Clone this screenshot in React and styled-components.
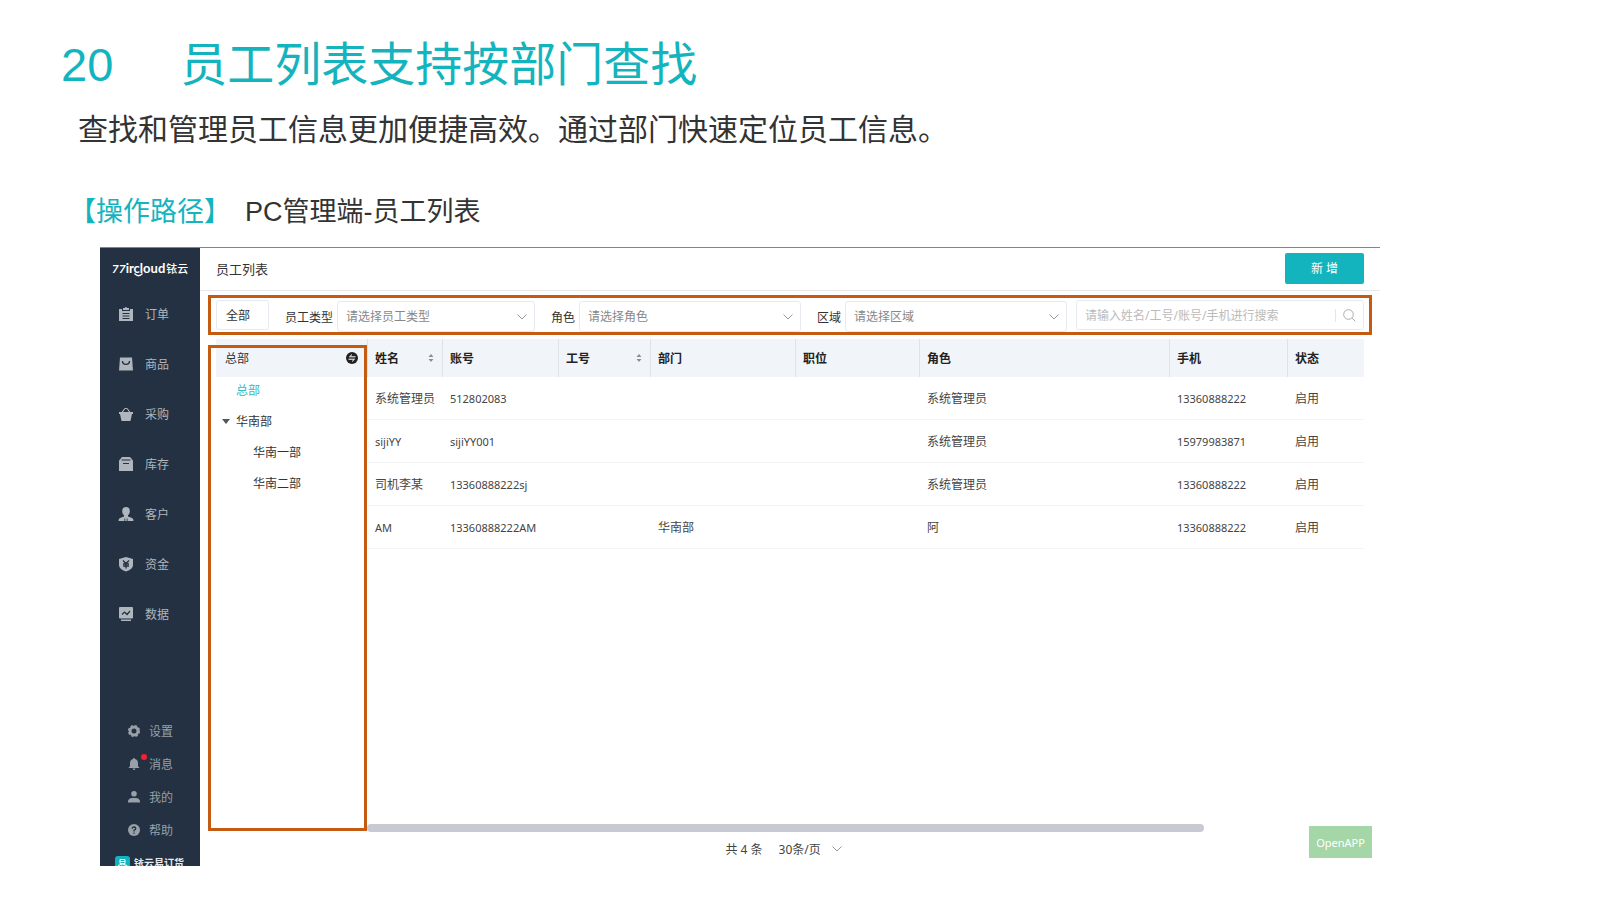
import React, { useState } from 'react'
import styled, { createGlobalStyle } from 'styled-components'

const GlobalStyle = createGlobalStyle`
    * {
        box-sizing: border-box;
    }

    body {
        margin: 0;
        background: #fff;
        color: #333;
        font-family: 'Noto Sans', 'Noto Sans CJK SC', sans-serif;
        font-size: 12px;
    }

    button, input, select {
        font-family: inherit;
        font-size: inherit;
        color: inherit;
    }
`

const Slide = styled.div`
    display: flex;
    flex-direction: column;
    min-height: 100vh;
    padding: 33px 220px 34px 61px;
    font-family: 'Liberation Sans', 'Noto Sans CJK SC', sans-serif;
`

const Title = styled.h1`
    display: flex;
    gap: 67px;
    margin: 0;
    color: #14b4be;
    font-size: 47px;
    font-weight: 400;
    line-height: 64px;
`

const Subtitle = styled.p`
    margin: 13px 0 0 17px;
    font-size: 30px;
    line-height: 40px;
`

const PathLine = styled.p`
    display: flex;
    gap: 14px;
    margin: 42px 0 15px 8px;
    font-size: 27px;
    line-height: 40px;

    strong {
        color: #14b4be;
        font-weight: 400;
    }
`

const Window = styled.div`
    display: grid;
    grid-template-columns: 100px 1fr;
    flex: 1;
    margin-left: 39px;
    border-top: 1px solid #6a9096;
    font-family: 'Noto Sans', 'Noto Sans CJK SC', sans-serif;
`

const Sidebar = styled.aside`
    display: flex;
    flex-direction: column;
    background: #233142;
    overflow: hidden;
`

const Logo = styled.div`
    position: relative;
    display: flex;
    align-items: center;
    justify-content: center;
    gap: 1px;
    height: 41px;
    padding-bottom: 2px;
    color: #fff;
    font-family: Lato, 'Noto Sans CJK SC', sans-serif;
    font-size: 13px;
    font-weight: 700;

    i {
        font-size: 12px;
    }

    small {
        font-size: 11px;
        font-weight: 500;
    }

    svg {
        position: absolute;
        top: 25px;
        left: 34px;
    }
`

const Nav = styled.nav`
    display: flex;
    flex-direction: column;
    margin-top: ${({ $bottom }) => ($bottom ? 'auto' : '0')};
`

const NavLink = styled.a`
    position: relative;
    display: flex;
    align-items: center;
    gap: ${({ $small }) => ($small ? '9px' : '12px')};
    height: ${({ $small }) => ($small ? '33px' : '50px')};
    padding-left: ${({ $small }) => ($small ? '28px' : '19px')};
    color: ${({ $small }) => ($small ? '#98a0a8' : '#b0b6bd')};
    text-decoration: none;
`

const Dot = styled.span`
    position: absolute;
    top: 7px;
    left: 41px;
    width: 6px;
    height: 6px;
    border-radius: 50%;
    background: #f5222d;
`

const Brand = styled.div`
    display: flex;
    gap: 4px;
    height: 20px;
    padding: 10px 0 0 15px;
    color: #e8ebee;
    font-size: 10px;
    font-weight: 700;
    line-height: 14px;
    white-space: nowrap;
    overflow: hidden;

    svg {
        flex: none;
    }
`

const Main = styled.main`
    position: relative;
    display: flex;
    flex-direction: column;
    min-width: 0;
`

const Header = styled.header`
    display: flex;
    align-items: center;
    justify-content: space-between;
    height: 43px;
    padding: 0 16px 2px;
    border-bottom: 1px solid #e8e9ec;

    h2 {
        margin: 0;
        font-size: 13px;
        font-weight: 400;
    }
`

const AddButton = styled.button`
    width: 79px;
    height: 31px;
    border: 0;
    border-radius: 2px;
    background: #14b4be;
    color: #fff;
`

const Filters = styled.form`
    display: grid;
    grid-template-columns: 53px repeat(3, minmax(0, 250fr)) minmax(0, 281fr);
    align-items: start;
    gap: 16px;
    height: 40px;
    margin: 4px 8px;
    padding: 2px 5px 0;
    border: 3px solid #c55a11;
`

const AllButton = styled.button`
    height: 30px;
    padding: 0 9px;
    border: 1px solid #e6eaf0;
    border-radius: 3px;
    background: #fff;
    text-align: left;
`

const Field = styled.div`
    display: flex;
    align-items: center;
    align-self: end;
    gap: 4px;

    label {
        white-space: nowrap;
    }
`

const SelectBox = styled.div`
    position: relative;
    flex: 1;
    min-width: 0;

    select {
        width: 100%;
        height: ${({ $plain }) => ($plain ? '24px' : '31px')};
        padding: ${({ $plain }) => ($plain ? '0 32px 0 0' : '0 28px 0 8px')};
        border: ${({ $plain }) => ($plain ? '0' : '1px solid #e6eaf0')};
        border-radius: 3px;
        background: #fff;
        color: ${({ $plain }) => ($plain ? '#444' : '#888')};
        appearance: none;
    }

    svg {
        position: absolute;
        top: 50%;
        right: ${({ $plain }) => ($plain ? '13px' : '8px')};
        margin-top: -5px;
        pointer-events: none;
    }
`

const SearchBox = styled.div`
    display: flex;
    align-items: center;
    height: 30px;
    margin-left: -7px;
    padding: 0 7px 0 8px;
    border: 1px solid #e6eaf0;
    border-radius: 3px;

    input {
        flex: 1;
        min-width: 0;
        padding: 0;
        border: 0;
        outline: 0;
    }

    input::placeholder {
        color: #bbb;
    }

    button {
        display: flex;
        padding: 0 0 0 7px;
        border: 0;
        border-left: 1px solid #e3e6ea;
        background: none;
    }
`

const Content = styled.div`
    display: grid;
    grid-template-columns: 151px 1fr;
    flex: 1;
    padding: 0 16px;
`

const TreePanel = styled.section`
    position: relative;

    &::after {
        content: '';
        position: absolute;
        inset: 6px 0 1px -8px;
        border: 3px solid #c55a11;
        pointer-events: none;
    }
`

const TreeHeader = styled.div`
    display: flex;
    align-items: center;
    justify-content: space-between;
    height: 38px;
    padding: 0 9px;
    background: #f1f4f9;

    button {
        display: flex;
        padding: 0;
        border: 0;
        background: none;
    }
`

const Tree = styled.ul`
    display: flex;
    flex-direction: column;
    gap: 5px;
    margin: 0;
    padding: 0;
    list-style: none;
`

const TreeItem = styled.li`
    button {
        display: flex;
        align-items: center;
        gap: 6px;
        height: 26px;
        padding: 0 0 0 ${({ $level }) => ($level ? '37px' : '6px')};
        border: 0;
        background: none;
        color: ${({ $active }) => ($active ? '#2bbcc6' : '#333')};
    }
`

const Caret = styled.span`
    width: 8px;
    border: 4px solid transparent;
    border-top: 5px solid ${({ $hidden }) => ($hidden ? 'transparent' : '#555')};
    border-bottom: 0;
`

const TablePanel = styled.section`
    display: flex;
    flex-direction: column;
    justify-content: space-between;
    min-width: 0;
`

const Table = styled.table`
    width: 100%;
    border-collapse: separate;
    border-spacing: 0;
    table-layout: fixed;

    th, td {
        padding: 0 8px;
        text-align: left;
        white-space: nowrap;
    }

    th {
        height: 38px;
        padding-left: 7px;
        border-left: 1px solid #dfe3e8;
        background: #f1f4f9;
        color: #222;
        font-weight: 700;
    }

    td {
        height: 43px;
        border-bottom: 1px solid #f3f4f6;
        color: #444;
    }
`

const HeadCell = styled.div`
    display: flex;
    align-items: center;
    justify-content: space-between;
`

const Latin = styled.span`
    font-size: 11px;
`

const ScrollBar = styled.div`
    width: 84%;
    height: 8px;
    border-radius: 4px;
    background: #c7cad2;
`

const Footer = styled.footer`
    display: flex;
    align-items: center;
    justify-content: center;
    gap: 16px;
    height: 34px;
    color: #444;

    > div {
        flex: 0 0 76px;
    }
`

const OpenApp = styled.button`
    position: absolute;
    right: 8px;
    bottom: 8px;
    width: 63px;
    height: 32px;
    padding: 0;
    border: 0;
    background: #a5d6a7;
    color: #fff;
    font-size: 11px;
`

const DARK = '#233142'

const navIcons = {
    order: (
        <>
            <path d="M0 2h3v2h8V2h3v12H0z" />
            <path d="M4 1h2a1 1 0 0 1 2 0h2v2H4z" />
            <path d="M3.500 6.500h7M3.500 9h7M3.500 11.500h7" stroke={DARK} />
        </>
    ),
    goods: (
        <>
            <path d="M1 0.500h12L14 13.500H0z" />
            <path d="M3.500 4c0 4.500 7 4.500 7 0" fill="none" stroke={DARK} strokeWidth="1.4" />
        </>
    ),
    purchase: (
        <>
            <path d="M0 5h14v2h-1l-1.500 7h-9L1 7H0z" />
            <path d="M3 5.500 5.500 2M11 5.500 8.500 2M5.500 1.500h3" fill="none" stroke="currentColor" strokeWidth="1.2" />
        </>
    ),
    stock: (
        <>
            <path d="M3 0h8l3 3.500V14H0V3.500z" />
            <path d="M2.500 3h9M4 6.500h6" stroke={DARK} strokeWidth="1.2" />
        </>
    ),
    customer: (
        <>
            <ellipse cx="7" cy="4.2" rx="3.8" ry="4.2" />
            <path d="M5 7h4v2.500l4 1.500q1.500.6 1.500 3h-15q0-2.400 1.500-3l4-1.500z" />
            <path d="M5.800 14V11.500M8.200 14V11.500" stroke={DARK} strokeWidth=".8" />
        </>
    ),
    funds: (
        <>
            <path d="M7 0l7 2v6q0 4-7 6.500Q0 12 0 8V2z" />
            <path d="M4 3.500 7 6.500l3-3M4 7h6M4 9h6M7 6.500v5" fill="none" stroke={DARK} strokeWidth="1.3" />
        </>
    ),
    data: (
        <>
            <rect width="14" height="11.5" rx="1" />
            <path d="M2 12.500h10V14H2z" />
            <path d="M3 7.500 5.500 5l2.500 2.500L11 4" fill="none" stroke={DARK} strokeWidth="1.2" />
        </>
    ),
    settings: (
        <>
            <circle cx="6" cy="6" r="3.9" fill="none" stroke="currentColor" strokeWidth="2.8" />
            <circle cx="6" cy="6" r="5.3" fill="none" stroke="currentColor" strokeWidth="1.6" strokeDasharray="2.6 1.56" />
        </>
    ),
    message: <path d="M6 0q1 0 1 1 3 .8 3 4v3l1.500 2H.5L2 8V5q0-3.200 3-4 0-1 1-1zM4.500 10.500h3Q7 12 6 12t-1.500-1.500z" />,
    mine: (
        <>
            <circle cx="6" cy="2.8" r="2.8" />
            <path d="M0 11.500V10q1-3 4-3h4q3 0 4 3v1.500z" />
        </>
    ),
    help: (
        <>
            <circle cx="6" cy="6" r="6" />
            <path d="M4.200 4.800q0-1.800 1.800-1.800t1.800 1.600Q7.800 5.600 6 6.400V7.500M6 8.500v1.300" fill="none" stroke={DARK} strokeWidth="1.3" />
        </>
    ),
}

const NavIcon = ({ name, size }) => (
    <svg width={size} height={size} viewBox={`0 0 ${size} ${size}`} fill="currentColor" overflow="visible" aria-hidden="true">
        {navIcons[name]}
    </svg>
)

const Chevron = () => (
    <svg width="10" height="10" viewBox="0 0 10 10" fill="none" stroke="#999" aria-hidden="true">
        <path d="M.5 2.500 5 7l4.500-4.500" />
    </svg>
)

const SortIcon = () => (
    <svg width="6" height="8" viewBox="0 0 6 8" fill="#8a8f96" aria-hidden="true">
        <path d="M3 0l2.500 3h-5zM3 8 .5 5h5z" />
    </svg>
)

const mainNav = [
    ['order', '订单'],
    ['goods', '商品'],
    ['purchase', '采购'],
    ['stock', '库存'],
    ['customer', '客户'],
    ['funds', '资金'],
    ['data', '数据'],
]

const bottomNav = [
    ['settings', '设置'],
    ['message', '消息'],
    ['mine', '我的'],
    ['help', '帮助'],
]

const filters = [
    { id: 'type', label: '员工类型', placeholder: '请选择员工类型' },
    { id: 'role', label: '角色', placeholder: '请选择角色' },
    { id: 'area', label: '区域', placeholder: '请选择区域' },
]

const departments = [
    { name: '总部', level: 0 },
    { name: '华南部', level: 0, open: true },
    { name: '华南一部', level: 1 },
    { name: '华南二部', level: 1 },
]

const columns = [
    { key: 'name', title: '姓名', width: 75, sortable: true },
    { key: 'account', title: '账号', width: 116 },
    { key: 'no', title: '工号', width: 92, sortable: true },
    { key: 'dept', title: '部门', width: 145 },
    { key: 'post', title: '职位', width: 124 },
    { key: 'role', title: '角色', width: 250 },
    { key: 'phone', title: '手机', width: 118 },
    { key: 'status', title: '状态', width: 77 },
]

const totalWidth = columns.reduce((sum, column) => sum + column.width, 0)

const employees = [
    { name: '系统管理员', account: '512802083', role: '系统管理员', phone: '13360888222', status: '启用' },
    { name: 'sijiYY', account: 'sijiYY001', role: '系统管理员', phone: '15979983871', status: '启用' },
    { name: '司机李某', account: '13360888222sj', role: '系统管理员', phone: '13360888222', status: '启用' },
    { name: 'AM', account: '13360888222AM', dept: '华南部', role: '阿', phone: '13360888222', status: '启用' },
]

const renderValue = (value) => (/^\w+$/.test(value || '') ? <Latin>{value}</Latin> : value)

const AppSidebar = () => (
    <Sidebar>
        <Logo>
            <span><i>77</i>ircloud</span>
            <small>铱云</small>
            <svg width="9" height="4" viewBox="0 0 9 4" fill="none" stroke="#fff" strokeWidth="1.3">
                <path d="M.5.5q4 4.500 8 0" />
            </svg>
        </Logo>
        <Nav>
            {mainNav.map(([icon, label]) => (
                <NavLink key={icon} href="#">
                    <NavIcon name={icon} size={14} />
                    {label}
                </NavLink>
            ))}
        </Nav>
        <Nav $bottom>
            {bottomNav.map(([icon, label]) => (
                <NavLink key={icon} href="#" $small>
                    <NavIcon name={icon} size={12} />
                    {icon === 'message' && <Dot />}
                    {label}
                </NavLink>
            ))}
        </Nav>
        <Brand>
            <svg width="15" height="15" viewBox="0 0 15 15" fill="none" stroke="#fff" aria-hidden="true">
                <rect width="15" height="15" rx="3" fill="#14b4be" stroke="none" />
                <path d="M5 3.500h5v4H5zM5 5.500h5M3 9.500q4.500-3 9 0v4M4 13q3-1 3-3.500M7 13.500q3-1 3-4" />
            </svg>
            铱云易订货
        </Brand>
    </Sidebar>
)

const DepartmentTree = () => {
    const [active, setActive] = useState('总部')

    return (
        <TreePanel>
            <TreeHeader>
                总部
                <button type="button" aria-label="切换">
                    <svg width="12" height="12" viewBox="0 0 12 12" fill="#222">
                        <circle cx="6" cy="6" r="6" />
                        <path d="M9.500 4.800H3.500L6 2.500M2.500 7.200h6L6 9.500" fill="none" stroke="#fff" />
                    </svg>
                </button>
            </TreeHeader>
            <Tree>
                {departments.map(({ name, level, open }) => (
                    <TreeItem key={name} $level={level} $active={name === active}>
                        <button type="button" onClick={() => setActive(name)}>
                            {level === 0 && <Caret $hidden={!open} />}
                            {name}
                        </button>
                    </TreeItem>
                ))}
            </Tree>
        </TreePanel>
    )
}

const EmployeeTable = () => (
    <TablePanel>
        <Table>
            <colgroup>
                {columns.map(({ key, width }) => (
                    <col key={key} style={{ width: `${(width / totalWidth) * 100}%` }} />
                ))}
            </colgroup>
            <thead>
                <tr>
                    {columns.map(({ key, title, sortable }) => (
                        <th key={key}>
                            <HeadCell>
                                {title}
                                {sortable && <SortIcon />}
                            </HeadCell>
                        </th>
                    ))}
                </tr>
            </thead>
            <tbody>
                {employees.map((employee) => (
                    <tr key={employee.account}>
                        {columns.map(({ key }) => (
                            <td key={key}>{renderValue(employee[key])}</td>
                        ))}
                    </tr>
                ))}
            </tbody>
        </Table>
        <ScrollBar />
    </TablePanel>
)

const App = () => {
    const [keyword, setKeyword] = useState('')

    return (
        <>
            <GlobalStyle />
            <Slide>
                <Title>
                    <span>20</span>
                    <span>员工列表支持按部门查找</span>
                </Title>
                <Subtitle>查找和管理员工信息更加便捷高效。通过部门快速定位员工信息。</Subtitle>
                <PathLine>
                    <strong>【操作路径】</strong>
                    <span>PC管理端-员工列表</span>
                </PathLine>
                <Window>
                    <AppSidebar />
                    <Main>
                        <Header>
                            <h2>员工列表</h2>
                            <AddButton type="button">新 增</AddButton>
                        </Header>
                        <Filters onSubmit={(e) => e.preventDefault()}>
                            <AllButton type="button">全部</AllButton>
                            {filters.map(({ id, label, placeholder }) => (
                                <Field key={id}>
                                    <label htmlFor={id}>{label}</label>
                                    <SelectBox>
                                        <select id={id}>
                                            <option>{placeholder}</option>
                                        </select>
                                        <Chevron />
                                    </SelectBox>
                                </Field>
                            ))}
                            <SearchBox>
                                <input
                                    aria-label="搜索"
                                    placeholder="请输入姓名/工号/账号/手机进行搜索"
                                    value={keyword}
                                    onChange={(e) => setKeyword(e.target.value)}
                                />
                                <button type="submit" aria-label="搜索">
                                    <svg width="13" height="13" viewBox="0 0 13 13" fill="none" stroke="#aaa">
                                        <circle cx="5.5" cy="5.5" r="4.8" />
                                        <path d="M9 9l3.300 3.300" />
                                    </svg>
                                </button>
                            </SearchBox>
                        </Filters>
                        <Content>
                            <DepartmentTree />
                            <EmployeeTable />
                        </Content>
                        <Footer>
                            <span>共 4 条</span>
                            <SelectBox $plain>
                                <select aria-label="每页条数">
                                    <option>30条/页</option>
                                </select>
                                <Chevron />
                            </SelectBox>
                        </Footer>
                        <OpenApp type="button">OpenAPP</OpenApp>
                    </Main>
                </Window>
            </Slide>
        </>
    )
}

export default App
